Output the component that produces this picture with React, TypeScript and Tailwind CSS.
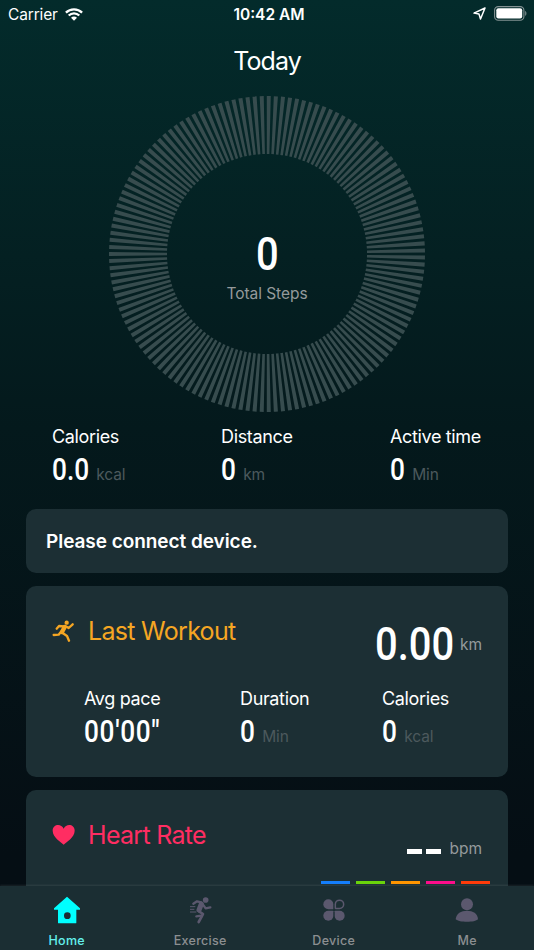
import React from 'react';

type StatProps = {
    label: string;
    value: string;
    unit?: string;
    className?: string;
};

const Stat: React.FC<StatProps> = ({ label, value, unit, className }) => (
    <div className={className}>
        <p className="text-[18px] leading-6 tracking-[-0.35px] whitespace-nowrap">{label}</p>
        <div className="flex items-baseline mt-0.5 h-9">
            <span className={`inline-block origin-left scale-x-[0.82] font-['Roboto',sans-serif] text-[32px] leading-9 font-medium whitespace-nowrap ${unit ? '' : 'tracking-[0.8px]'}`}>{value}</span>
            {unit && <span className={value.length > 1 ? "ml-[-1px] text-[15.5px] tracking-[-0.1px] text-[#4c595d]" : "ml-1 text-[15.5px] tracking-[-0.1px] text-[#4c595d]"}>{unit}</span>}
        </div>
    </div>
);

const WifiIcon = () => (
    <svg className="w-[18px] h-[13px]" viewBox="0 0 18 13" fill="none" stroke="white" strokeWidth="2.3">
        <path d="M0.9 4.6C5.4 0.2 12.6 0.2 17.1 4.6" />
        <path d="M3.7 7.5C6.7 4.6 11.3 4.6 14.3 7.5" />
        <path d="M9 12.8L6 9.8C7.7 8.2 10.3 8.2 12 9.8Z" fill="white" stroke="none" />
    </svg>
);

const LocationIcon = () => (
    <svg className="w-[13px] h-[13px]" viewBox="0 0 13 13" fill="none" stroke="white" strokeWidth="1.5" strokeLinejoin="round">
        <path d="M12 1L1 6.1L6 7.1L7.5 12Z" />
    </svg>
);

const BatteryIcon = () => (
    <svg className="w-[33px] h-[15px]" viewBox="0 0 33 15">
        <rect x="0.6" y="0.6" width="29.3" height="13.6" rx="3.7" fill="none" stroke="#839293" strokeWidth="1.1" />
        <rect x="2.3" y="2.3" width="25.9" height="10.2" rx="2" fill="white" />
        <path d="M31.2 5C32.8 5.6 32.8 9.2 31.2 9.8Z" fill="#839293" />
    </svg>
);

const WorkoutIcon = () => (
    <svg className="w-[22px] h-[22px]" viewBox="157 90 66 66" fill="none" stroke="#f5a623" strokeWidth="7" strokeLinecap="round" strokeLinejoin="round">
        <circle cx="201" cy="98" r="6.5" fill="#f5a623" stroke="none" />
        <path d="M171 116L178 108L193 109" />
        <path d="M198 109L207 114L219 103" />
        <path d="M195 111L187 126" strokeWidth="13" />
        <path d="M184 125L177 134L162 135" />
        <path d="M189 129L202 138L208 152" />
    </svg>
);

const HeartIcon = () => (
    <svg className="w-[23px] h-5" viewBox="157 165 67 60" fill="#ff2d62">
        <path d="M191 224C184 217 158 202 158 182C158 163 183 159 191 176C199 159 224 163 224 182C224 202 198 217 191 224Z" />
    </svg>
);

const HomeIcon = () => (
    <svg className="w-7 h-7" viewBox="158 379 84 84" fill="#00ffff">
        <path fillRule="evenodd" d="M200 381L239 416V420H228V459Q228 461 226 461H175Q173 461 173 459V420H161V416ZM201 428A10 10 0 1 0 201 448A10 10 0 1 0 201 428Z" />
    </svg>
);

const ExerciseIcon = () => (
    <svg className="w-7 h-7" viewBox="558 380 84 84" fill="none" stroke="#5b586e" strokeWidth="7" strokeLinecap="round" strokeLinejoin="round">
        <circle cx="617" cy="392" r="8.5" fill="#5b586e" stroke="none" />
        <path d="M604 399L591 396L580 403" />
        <path d="M609 406L617 417L631 414" />
        <path d="M604 404L597 422" strokeWidth="15" />
        <path d="M597 426L609 434L605 442L596 458" strokeWidth="8" />
        <path d="M604 439L589 441" />
        <path d="M570 412H586M570 420H583M570 428H589" strokeWidth="3" strokeLinecap="butt" />
    </svg>
);

const DeviceIcon = () => (
    <svg className="w-7 h-7" viewBox="158 381 84 84" fill="#5b586e">
        <path d="M198 419V406A15 15 0 1 0 183 421H196Q198 421 198 419Z" />
        <path d="M204 417V406A12.5 12.5 0 1 1 216.5 418.5H205.5Q204 418.5 204 417Z" fill="none" stroke="#5b586e" strokeWidth="4.5" />
        <path d="M198 427V440A15 15 0 1 1 183 425H196Q198 425 198 427Z" />
        <path d="M202 427V440A15 15 0 1 0 217 425H204Q202 425 202 427Z" />
    </svg>
);

const MeIcon = () => (
    <svg className="w-7 h-7" viewBox="559 381 84 84" fill="#5b586e">
        <circle cx="601" cy="405.5" r="18" />
        <path d="M567 451C569 433 583 425 601 425C619 425 633 433 634 451C625 461 577 461 567 451Z" />
    </svg>
);

const tabs = [
    { label: 'Home', icon: HomeIcon, active: true },
    { label: 'Exercise', icon: ExerciseIcon, active: false },
    { label: 'Device', icon: DeviceIcon, active: false },
    { label: 'Me', icon: MeIcon, active: false }
];

const zones = ['bg-[#147efb]', 'bg-[#6ad30b]', 'bg-[#ff9500]', 'bg-[#fc0d8b]', 'bg-[#ff3b0a]'];

const StepsRing = () => (
    <div className="relative w-[316px] h-[316px] mx-auto">
        <svg className="w-full h-full" viewBox="0 0 316 316">
            <circle cx="158" cy="158" r="129" fill="none" stroke="#374c4e" strokeWidth="58" pathLength="139" strokeDasharray="0.57 0.43" strokeDashoffset="-0.215" />
        </svg>
        <div className="absolute inset-0 flex flex-col items-center pt-[130px]">
            <span className="inline-block scale-x-[0.85] font-['Roboto',sans-serif] text-[47px] leading-[56px] font-medium">0</span>
            <span className="mt-0.5 text-[15.5px] leading-5 tracking-[-0.05px] text-[#949a9b]">Total Steps</span>
        </div>
    </div>
);

export default function App() {
    return (
        <div className="w-[534px] h-[950px] flex flex-col overflow-hidden bg-linear-to-b from-[#032b2b] via-[#04191c] via-45% to-[#050e14] to-90% font-['Inter',sans-serif] text-white">
            <header className="h-7 shrink-0 grid grid-cols-3 items-center px-2 pt-px text-[15.5px]">
                <div className="flex items-center gap-[7px] tracking-[-0.15px]">
                    <span>Carrier</span>
                    <WifiIcon />
                </div>
                <span className="pl-1 text-center font-semibold text-[15.5px]">10:42 AM</span>
                <div className="flex items-center justify-end gap-2 -mr-px -mt-[3px]">
                    <LocationIcon />
                    <BatteryIcon />
                </div>
            </header>

            <main className="flex-1 min-h-0 overflow-hidden">
                <h1 className="h-[68px] pt-[17px] text-center text-[25px] leading-8 tracking-[-0.9px]">Today</h1>
                <StepsRing />

                <section className="flex h-[97px] pt-[13px] pl-[52px]">
                    <Stat label="Calories" value="0.0" unit="kcal" className="w-[169px]" />
                    <Stat label="Distance" value="0" unit="km" className="w-[169px]" />
                    <Stat label="Active time" value="0" unit="Min" />
                </section>

                <div className="mx-[26px] space-y-[13px]">
                    <section className="h-16 flex items-center rounded-[10px] bg-[#1c2f34] pl-5 pt-0.5 text-[19px] font-semibold tracking-[-0.05px]">
                        Please connect device.
                    </section>

                    <section className="h-[191px] rounded-[10px] bg-[#1c2f34] px-[26px]">
                        <div className="flex h-[101px] justify-between">
                            <div className="flex items-center h-[90px] gap-3.5 text-[#f5a623]">
                                <WorkoutIcon />
                                <h2 className="pt-0.5 text-[25px] tracking-[-0.7px]">Last Workout</h2>
                            </div>
                            <div className="flex items-baseline pt-[30px]">
                                <span className="inline-block origin-right scale-x-[0.85] font-['Roboto',sans-serif] text-[47px] leading-[56px] font-medium">0.00</span>
                                <span className="ml-1.5 relative -top-2.5 text-[15.5px] text-[#949a9b]">km</span>
                            </div>
                        </div>
                        <div className="flex pl-8">
                            <Stat label="Avg pace" value={`00'00"`} className="w-[156px]" />
                            <Stat label="Duration" value="0" unit="Min" className="w-[142px]" />
                            <Stat label="Calories" value="0" unit="kcal" />
                        </div>
                    </section>

                    <section className="h-[191px] rounded-[10px] bg-[#1c2f34] px-[26px]">
                        <div className="flex h-[91px] justify-between">
                            <div className="flex items-center h-[90px] gap-[13px] text-[#ff2d62]">
                                <HeartIcon />
                                <h2 className="pt-0.5 text-[25px] tracking-[-0.7px]">Heart Rate</h2>
                            </div>
                            <div className="flex items-center pt-[26px] text-[15.5px] text-[#949a9b]">
                                <span className="w-[15px] h-[5px] mt-1.5 mr-1 bg-white" />
                                <span className="w-[15px] h-[5px] mt-1.5 mr-2 bg-white" />
                                bpm
                            </div>
                        </div>
                        <div className="flex justify-end gap-1.5 -mr-2">
                            {zones.map(zone => (
                                <span key={zone} className={`w-[29px] h-[3px] ${zone}`} />
                            ))}
                        </div>
                    </section>
                </div>
            </main>

            <nav className="h-16 shrink-0 flex bg-[#1b2e33] shadow-[0_-1px_2px_rgba(255,255,255,0.09)]">
                {tabs.map(tab => (
                    <div key={tab.label} className="flex-1 flex flex-col items-center pt-2.5">
                        <tab.icon />
                        <span className={`mt-[9px] text-[12.5px] leading-4 font-medium tracking-[0.3px] ${tab.active ? 'text-[#64f0ed]' : 'text-[#8c8f91]'}`}>{tab.label}</span>
                    </div>
                ))}
            </nav>
        </div>
    );
}
